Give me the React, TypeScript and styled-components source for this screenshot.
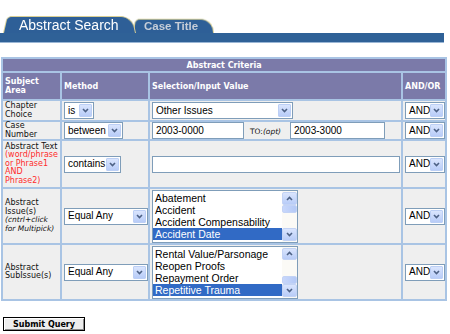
import React from 'react'
import styled, { createGlobalStyle } from 'styled-components'

const GlobalStyle = createGlobalStyle`
  html, body {
    margin: 0;
    padding: 0;
    background: #fff;
  }
  * {
    box-sizing: border-box;
  }
`

const Page = styled.div`
  padding-top: 14px;
  font-family: "DejaVu Sans", Verdana, sans-serif;
`

const TabRow = styled.div`
  display: flex;
  align-items: flex-end;
  height: 19px;
  padding-left: 3px;
`

const Tab = styled.div<{ $active?: boolean }>`
  position: relative;
  isolation: isolate;
  display: flex;
  align-items: center;
  height: ${p => (p.$active ? 18 : 15)}px;
  width: ${p => (p.$active ? 133 : 81)}px;
  margin-left: ${p => (p.$active ? 0 : -3)}px;
  padding-left: ${p => (p.$active ? 16 : 11)}px;
  padding-top: 1px;
  font-family: "Liberation Sans", Arial, sans-serif;
  font-size: ${p => (p.$active ? 14 : 11.5)}px;
  font-weight: ${p => (p.$active ? 'normal' : 'bold')};
  color: ${p => (p.$active ? '#fff' : '#c6cdd8')};
  z-index: ${p => (p.$active ? 2 : 1)};

  &::before {
    content: '';
    position: absolute;
    inset: 0;
    background: #2e5f97;
    border: 1px solid #d9cf94;
    border-bottom: none;
    border-radius: 5px 12px 0 0;
    transform: perspective(20px) rotateX(4deg);
    transform-origin: bottom;
    z-index: -1;
  }
`

const Bar = styled.div`
  width: 444px;
  height: 10px;
  background: #2f6197;
  border-bottom: 1px solid #9ab6d5;
`

const Criteria = styled.table`
  margin: 14px 0 0 1px;
  width: 444px;
  table-layout: fixed;
  border-spacing: 2px;
  background: #a9c4e4;
  font-size: 8px;
  line-height: 8.5px;
  color: #111;
`

const HeadCell = styled.th<{ $center?: boolean }>`
  background: #7b7aa9;
  color: #fff;
  font-weight: bold;
  text-align: ${p => (p.$center ? 'center' : 'left')};
  vertical-align: middle;
  padding: 0 2px;
  line-height: 9px;
`

const Cell = styled.td`
  background: #efefef;
  vertical-align: middle;
  padding: 0 2px;
`

const Row = styled.tr<{ $h: number }>`
  height: ${p => p.$h}px;
`

const Note = styled.span`
  color: #ff2b2b;
`

const Hint = styled.span`
  font-style: italic;
  font-size: 7.5px;
`

const SelectBox = styled.div<{ $w: number }>`
  display: inline-flex;
  align-items: center;
  width: ${p => p.$w}px;
  height: 17px;
  border: 1px solid #7f9db9;
  background: #fff;
  font-family: "Liberation Sans", Arial, sans-serif;
  font-size: 10px;
  line-height: 12px;
  color: #000;
  vertical-align: middle;
`

const SelectValue = styled.span`
  flex: 1;
  padding-left: 3px;
  white-space: nowrap;
  overflow: hidden;
`

const ArrowBtn = styled.span`
  display: flex;
  align-items: center;
  justify-content: center;
  flex: none;
  width: 13px;
  height: 13px;
  margin-right: 1px;
  background: linear-gradient(#dae5fd, #b8ccf8);
  border: 1px solid #bccff5;
  border-radius: 1px;
`

const TextBox = styled.div<{ $w: number }>`
  display: inline-flex;
  align-items: center;
  width: ${p => p.$w}px;
  height: 17px;
  padding-left: 3px;
  border: 1px solid #7f9db9;
  background: #fff;
  font-family: "Liberation Sans", Arial, sans-serif;
  font-size: 10px;
  line-height: 12px;
  color: #000;
  vertical-align: middle;
`

const RangeLine = styled.div`
  display: flex;
  align-items: center;
`

const ToLabel = styled.span`
  margin: 0 6px;
  padding-top: 3px;
  font-size: 7.5px;
  width: 34px;
  white-space: nowrap;
`

const ListBox = styled.div`
  display: flex;
  width: 146px;
  height: 53px;
  border: 1px solid #7f9db9;
  background: #fff;
  font-family: "Liberation Sans", Arial, sans-serif;
  font-size: 10.5px;
  color: #000;
`

const Options = styled.div`
  flex: 1;
  padding-top: 1px;
  overflow: hidden;
`

const Option = styled.div<{ $selected?: boolean }>`
  height: 12.2px;
  line-height: 12.2px;
  padding-left: 2px;
  white-space: nowrap;
  overflow: hidden;
  background: ${p => (p.$selected ? '#316ac5' : 'transparent')};
  color: ${p => (p.$selected ? '#fff' : '#000')};
`

const ScrollBar = styled.div`
  display: flex;
  flex-direction: column;
  width: 15px;
  background: #fbfaf6;
  padding: 1px 0;
`

const ScrollBtn = styled.div`
  display: flex;
  align-items: center;
  justify-content: center;
  height: 13px;
  background: linear-gradient(#dae5fd, #b8ccf8);
  border: 1px solid #c3d3f5;
  border-radius: 2px;
`

const Track = styled.div<{ $top: number }>`
  flex: 1;
  display: flex;
  flex-direction: column;
  padding-top: ${p => p.$top}px;
`

const Thumb = styled.div`
  height: 8px;
  background: linear-gradient(90deg, #c8d7fb, #b4c9f6);
  border: 1px solid #c3d3f5;
  border-radius: 2px;
`

const Submit = styled.button`
  display: block;
  margin: 16px 0 0 3px;
  width: 82px;
  height: 14px;
  padding: 0;
  border: 1px solid #000;
  box-shadow: inset 1px 1px #fff, inset -1px -1px #8a8a8a;
  background: #ededed;
  font-family: "DejaVu Sans", Verdana, sans-serif;
  font-size: 8px;
  font-weight: bold;
  color: #000;
`

const Chevron = ({ up }: { up?: boolean }) => (
  <svg width="7" height="5" viewBox="0 0 7 5">
    <path
      d={up ? 'M1 4 L3.5 1.5 L6 4' : 'M1 1 L3.5 3.5 L6 1'}
      fill="none"
      stroke="#4d6185"
      strokeWidth="1.6"
    />
  </svg>
)

const Select = ({ w, value }: { w: number; value: string }) => (
  <SelectBox $w={w}>
    <SelectValue>{value}</SelectValue>
    <ArrowBtn>
      <Chevron />
    </ArrowBtn>
  </SelectBox>
)

const MultiList = ({ items, selected, thumb }: { items: string[]; selected: string; thumb: number }) => (
  <ListBox>
    <Options>
      {items.map(item => (
        <Option key={item} $selected={item === selected}>{item}</Option>
      ))}
    </Options>
    <ScrollBar>
      <ScrollBtn><Chevron up /></ScrollBtn>
      <Track $top={thumb}>
        <Thumb />
      </Track>
      <ScrollBtn><Chevron /></ScrollBtn>
    </ScrollBar>
  </ListBox>
)

export default function App() {
  return (
    <Page>
      <GlobalStyle />
      <TabRow>
        <Tab $active>Abstract Search</Tab>
        <Tab>Case Title</Tab>
      </TabRow>
      <Bar />

      <Criteria>
        <colgroup>
          <col style={{ width: 57 }} />
          <col style={{ width: 86 }} />
          <col style={{ width: 251 }} />
          <col style={{ width: 42 }} />
        </colgroup>
        <thead>
          <Row $h={12}>
            <HeadCell colSpan={4} $center>Abstract Criteria</HeadCell>
          </Row>
          <Row $h={26}>
            <HeadCell>Subject Area</HeadCell>
            <HeadCell>Method</HeadCell>
            <HeadCell>Selection/Input Value</HeadCell>
            <HeadCell>AND/OR</HeadCell>
          </Row>
        </thead>
        <tbody>
          <Row $h={19}>
            <Cell>Chapter Choice</Cell>
            <Cell><Select w={30} value="is" /></Cell>
            <Cell><Select w={141} value="Other Issues" /></Cell>
            <Cell><Select w={40} value="AND" /></Cell>
          </Row>
          <Row $h={17}>
            <Cell>Case Number</Cell>
            <Cell><Select w={59} value="between" /></Cell>
            <Cell>
              <RangeLine>
                <TextBox $w={92}>2003-0000</TextBox>
                <ToLabel>TO:<i>(opt)</i></ToLabel>
                <TextBox $w={95}>2003-3000</TextBox>
              </RangeLine>
            </Cell>
            <Cell><Select w={40} value="AND" /></Cell>
          </Row>
          <Row $h={46}>
            <Cell>
              Abstract Text <Note>(word/phrase or Phrase1 AND Phrase2)</Note>
            </Cell>
            <Cell><Select w={57} value="contains" /></Cell>
            <Cell><TextBox $w={248} /></Cell>
            <Cell><Select w={40} value="AND" /></Cell>
          </Row>
          <Row $h={54}>
            <Cell>
              Abstract Issue(s)
              <br />
              <Hint>(cntrl+click<br />for Multipick)</Hint>
            </Cell>
            <Cell><Select w={84} value="Equal Any" /></Cell>
            <Cell>
              <MultiList
                items={['Abatement', 'Accident', 'Accident Compensability', 'Accident Date']}
                selected="Accident Date"
                thumb={0}
              />
            </Cell>
            <Cell><Select w={40} value="AND" /></Cell>
          </Row>
          <Row $h={54}>
            <Cell>Abstract SubIssue(s)</Cell>
            <Cell><Select w={84} value="Equal Any" /></Cell>
            <Cell>
              <MultiList
                items={['Rental Value/Parsonage', 'Reopen Proofs', 'Repayment Order', 'Repetitive Trauma']}
                selected="Repetitive Trauma"
                thumb={16}
              />
            </Cell>
            <Cell><Select w={40} value="AND" /></Cell>
          </Row>
        </tbody>
      </Criteria>

      <Submit>Submit Query</Submit>
    </Page>
  )
}
